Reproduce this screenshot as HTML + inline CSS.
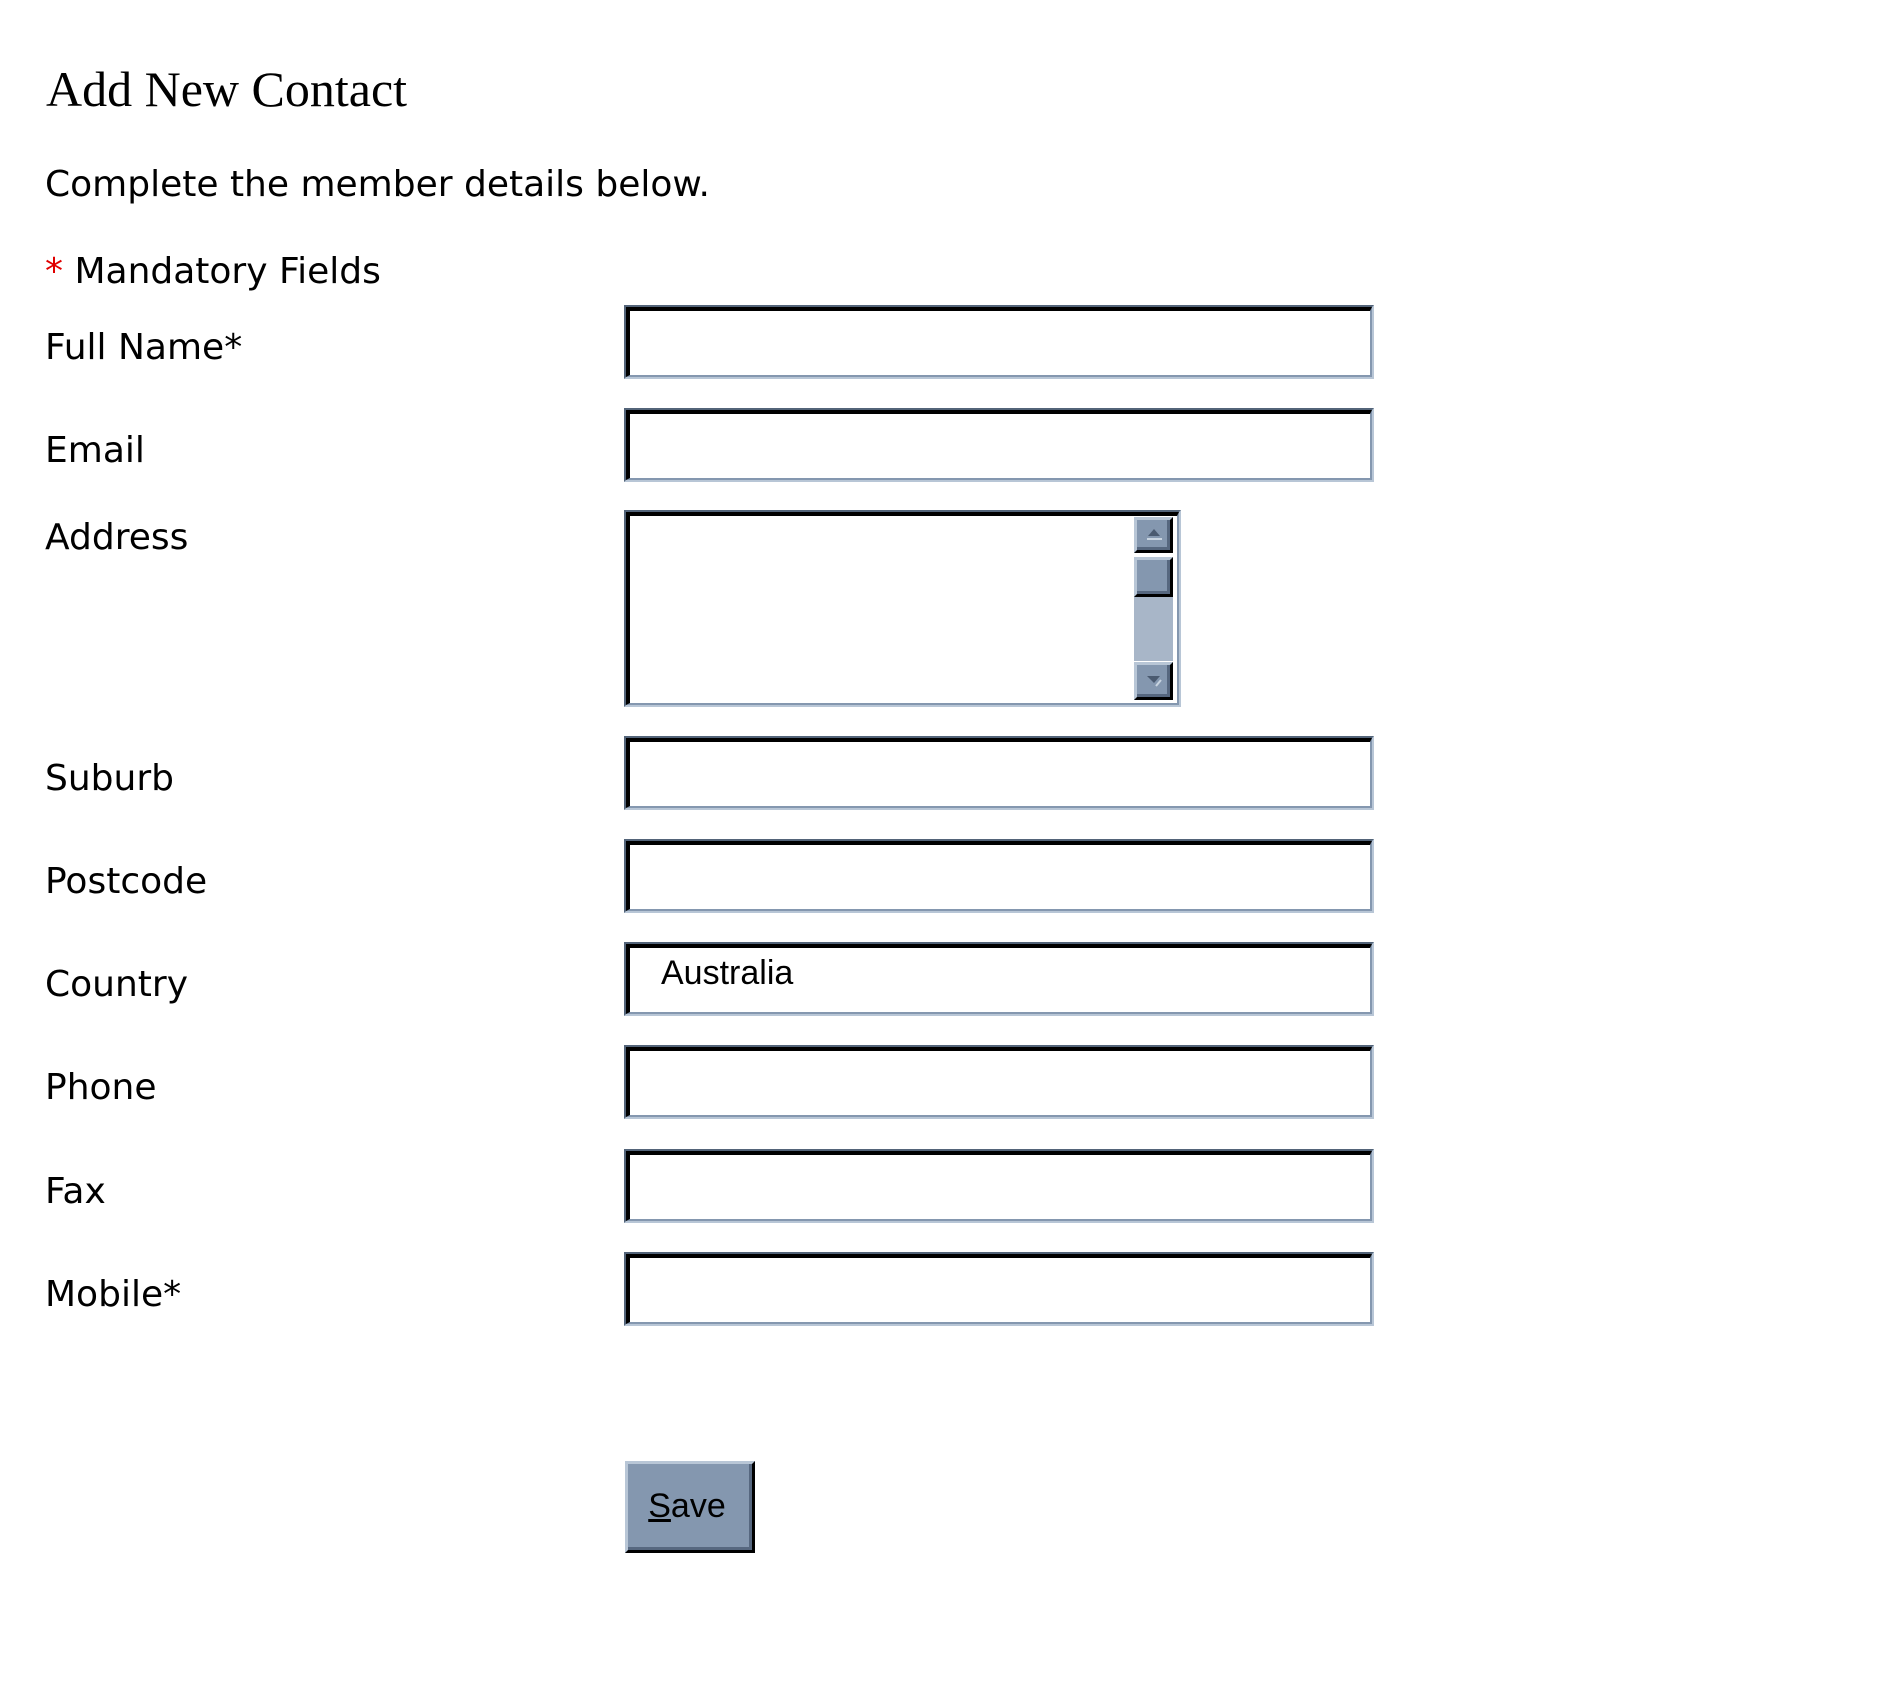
<!DOCTYPE html>
<html><head><meta charset="utf-8"><style>
html,body{margin:0;padding:0;background:#fff;width:1890px;height:1686px;overflow:hidden}
.t{position:absolute;font-family:"DejaVu Sans",sans-serif;font-size:36px;color:#000;white-space:nowrap;line-height:1}
.h{position:absolute;font-family:"Liberation Serif",serif;font-size:50px;left:46px;top:64px;line-height:1;white-space:nowrap}
.in{position:absolute;left:624px;width:750px;height:74px;box-sizing:border-box;border:2px solid;border-color:#536479 #b8c6d6 #b8c6d6 #536479;background:#fff}
.in>div{position:absolute;inset:0;border-style:solid;border-width:4px 2px 2px 4px;border-color:#000 #8497af #8497af #000}
.btn{position:absolute;box-sizing:border-box;background:#8497af;border:3px solid;border-color:#b8c6d6 #000 #000 #b8c6d6;box-shadow:inset -3px -3px 0 #56677f}
</style></head><body>
<div class="h">Add New Contact</div>
<div class="t" style="left:45px;top:167px">Complete the member details below.</div>
<div class="t" style="left:45px;top:254px"><span style="color:#e00000">*</span> Mandatory Fields</div>

<div class="t" style="left:45px;top:330px">Full Name*</div>
<div class="in" style="top:305px"><div></div></div>
<div class="t" style="left:45px;top:433px">Email</div>
<div class="in" style="top:408px"><div></div></div>
<div class="t" style="left:45px;top:520px">Address</div>
<div class="in" style="top:510px;width:557px;height:197px"><div></div></div>
<div class="btn" style="left:1134px;top:517px;width:39px;height:36px"></div>
<svg style="position:absolute;left:1145px;top:528px" width="18" height="14"><path d="M9 1 L15 8 L3 8Z" fill="#4a5a70"/><rect x="2" y="10" width="15" height="2" fill="#c8d4e0"/></svg>
<div class="btn" style="left:1134px;top:557px;width:39px;height:40px"></div>
<div style="position:absolute;left:1134px;top:597px;width:39px;height:64px;background:#a8b6c8"></div>
<div class="btn" style="left:1134px;top:662px;width:39px;height:38px"></div>
<svg style="position:absolute;left:1145px;top:674px" width="18" height="14"><path d="M2 2 L15 2 L9 9Z" fill="#4a5a70"/><path d="M11 12 L16 6" stroke="#c8d4e0" stroke-width="2"/></svg>

<div class="t" style="left:45px;top:761px">Suburb</div>
<div class="in" style="top:736px"><div></div></div>
<div class="t" style="left:45px;top:864px">Postcode</div>
<div class="in" style="top:839px"><div></div></div>
<div class="t" style="left:45px;top:967px">Country</div>
<div class="in" style="top:942px"><div></div><span style="position:absolute;left:35px;top:12px;font-family:'Liberation Sans',sans-serif;font-size:34px;line-height:1">Australia</span></div>
<div class="t" style="left:45px;top:1070px">Phone</div>
<div class="in" style="top:1045px"><div></div></div>
<div class="t" style="left:45px;top:1174px">Fax</div>
<div class="in" style="top:1149px"><div></div></div>
<div class="t" style="left:45px;top:1277px">Mobile*</div>
<div class="in" style="top:1252px"><div></div></div>

<div class="btn" style="left:625px;top:1461px;width:130px;height:92px;font-family:'Liberation Sans',sans-serif;font-size:34px;text-align:center;line-height:84px;text-indent:-6px"><span style="text-decoration:underline">S</span>ave</div>
</body></html>
